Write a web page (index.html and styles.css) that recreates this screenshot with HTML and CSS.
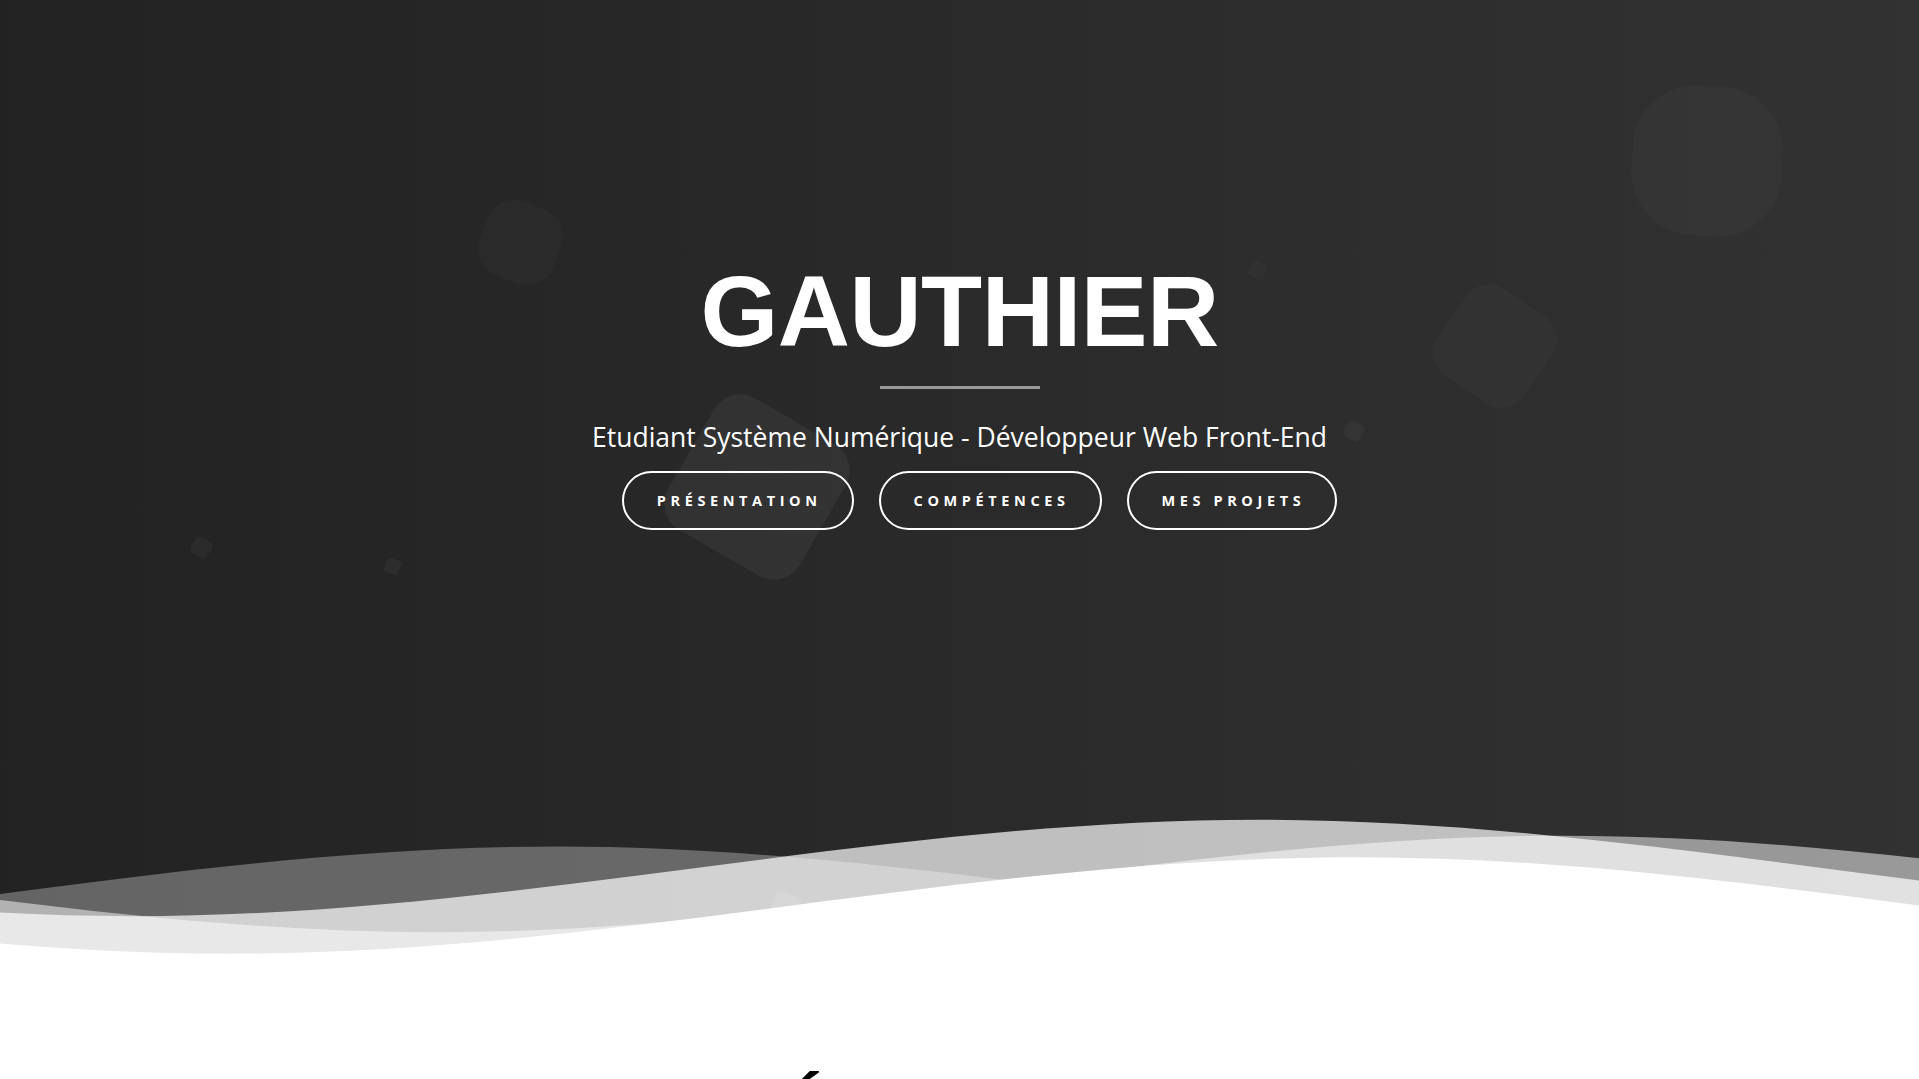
FILE: index.html
```html
<!DOCTYPE html>
<html lang="fr">
<head>
<meta charset="utf-8">
<title>Gauthier - Portfolio</title>
<link rel="stylesheet" href="styles.css">
</head>
<body>
<header class="hero">
  <ul class="blobs">
    <li class="blob b1"></li>
    <li class="blob b2"></li>
    <li class="blob b3"></li>
    <li class="blob b4"></li>
    <li class="blob b5"></li>
    <li class="blob b6"></li>
    <li class="blob b7"></li>
    <li class="blob b8"></li>
    <li class="blob b9"></li>
  </ul>
  <div class="hero-inner">
    <h1 class="title">GAUTHIER</h1>
    <div class="rule"></div>
    <p class="subtitle">Etudiant Système Numérique - Développeur Web Front-End</p>
    <nav class="actions">
      <a class="btn" href="#presentation">PRÉSENTATION</a>
      <a class="btn" href="#competences">COMPÉTENCES</a>
      <a class="btn" href="#projets">MES PROJETS</a>
    </nav>
  </div>
  <svg class="waves" xmlns="http://www.w3.org/2000/svg" viewBox="0 24 150 28" preserveAspectRatio="none">
    <defs>
      <path id="gentle-wave" d="M-160 44c30 0 58-18 88-18s 58 18 88 18 58-18 88-18 58 18 88 18 v44h-352z"/>
    </defs>
    <g>
      <use href="#gentle-wave" x="-5.6" y="0" fill="rgba(255,255,255,0.7)"/>
      <use href="#gentle-wave" x="18.2" y="3" fill="rgba(255,255,255,0.5)"/>
      <use href="#gentle-wave" x="115.5" y="5" fill="rgba(255,255,255,0.3)"/>
      <use href="#gentle-wave" x="2" y="7" fill="#fff"/>
    </g>
  </svg>
</header>
<section class="about" id="presentation">
  <h2 class="section-title">PRÉSENTATION</h2>
</section>
</body>
</html>
```

FILE: styles.css
```css
html, body {
  margin: 0;
  padding: 0;
  background: #fff;
}

body {
  font-family: "Open Sans", "Noto Sans", sans-serif;
}

.hero {
  position: relative;
  overflow: hidden;
  background: linear-gradient(90deg, #222222 0%, #323232 100%);
}

.blobs {
  position: absolute;
  inset: 0;
  margin: 0;
  padding: 0;
  list-style: none;
  z-index: 2;
  pointer-events: none;
}

.blob {
  position: absolute;
  display: block;
  background: rgba(255, 255, 255, 0.03);
}

.b1 { left: 1632px; top: 86px; width: 150px; height: 150px; border-radius: 42%; transform: rotate(4deg); background: rgba(255,255,255,0.025); }
.b2 { left: 1443px; top: 294px; width: 104px; height: 104px; border-radius: 26%; transform: rotate(35deg); background: rgba(255,255,255,0.025); }
.b3 { left: 481px; top: 203px; width: 79px; height: 79px; border-radius: 36%; transform: rotate(20deg); background: rgba(255,255,255,0.02); }
.b4 { left: 681px; top: 411px; width: 152px; height: 152px; border-radius: 20%; transform: rotate(30deg); background: rgba(255,255,255,0.05); }
.b5 { left: 1249px; top: 262px; width: 17px; height: 17px; border-radius: 30%; transform: rotate(30deg); background: rgba(255,255,255,0.025); }
.b6 { left: 1345px; top: 422px; width: 18px; height: 18px; border-radius: 25%; transform: rotate(30deg); background: rgba(255,255,255,0.035); }
.b7 { left: 192px; top: 538px; width: 19px; height: 19px; border-radius: 25%; transform: rotate(30deg); background: rgba(255,255,255,0.035); }
.b8 { left: 385px; top: 559px; width: 15px; height: 15px; border-radius: 25%; transform: rotate(20deg); background: rgba(255,255,255,0.04); }
.b9 { left: 772px; top: 893px; width: 26px; height: 26px; border-radius: 20%; transform: rotate(20deg); background: rgba(255,255,255,0.12); }

.hero-inner {
  position: relative;
  z-index: 3;
  height: 809px;
  box-sizing: border-box;
  padding-bottom: 25px;
  display: flex;
  flex-direction: column;
  align-items: center;
  justify-content: center;
  color: #fff;
  text-align: center;
}

.title {
  margin: 0;
  font-family: "Liberation Sans", Arial, sans-serif;
  font-weight: 700;
  font-size: 100px;
  line-height: 115px;
  letter-spacing: -0.5px;
  color: #fff;
}

.rule {
  width: 160px;
  height: 3px;
  margin-top: 17px;
  background: #999999;
}

.subtitle {
  margin: 29px 0 14px;
  font-family: "Open Sans", "Noto Sans", sans-serif;
  font-size: 26.5px;
  line-height: 39px;
  color: #fff;
}

.actions {
  display: flex;
  gap: 25px;
  margin-left: 40px;
}

.btn {
  display: block;
  padding: 18px 30px 18px 33px;
  border: 2px solid #fff;
  border-radius: 40px;
  color: #fff;
  text-decoration: none;
  font-family: "Open Sans", "Noto Sans", sans-serif;
  font-weight: 700;
  font-size: 14.5px;
  line-height: 19px;
  letter-spacing: 4.6px;
}

.waves {
  position: relative;
  z-index: 1;
  display: block;
  width: 100%;
  height: 150px;
}

.about {
  background: #fff;
  padding-top: 110px;
  text-align: center;
}

.section-title {
  margin: 0;
  font-family: "Liberation Sans", Arial, sans-serif;
  font-weight: 700;
  font-size: 72px;
  color: #000;
}
```
